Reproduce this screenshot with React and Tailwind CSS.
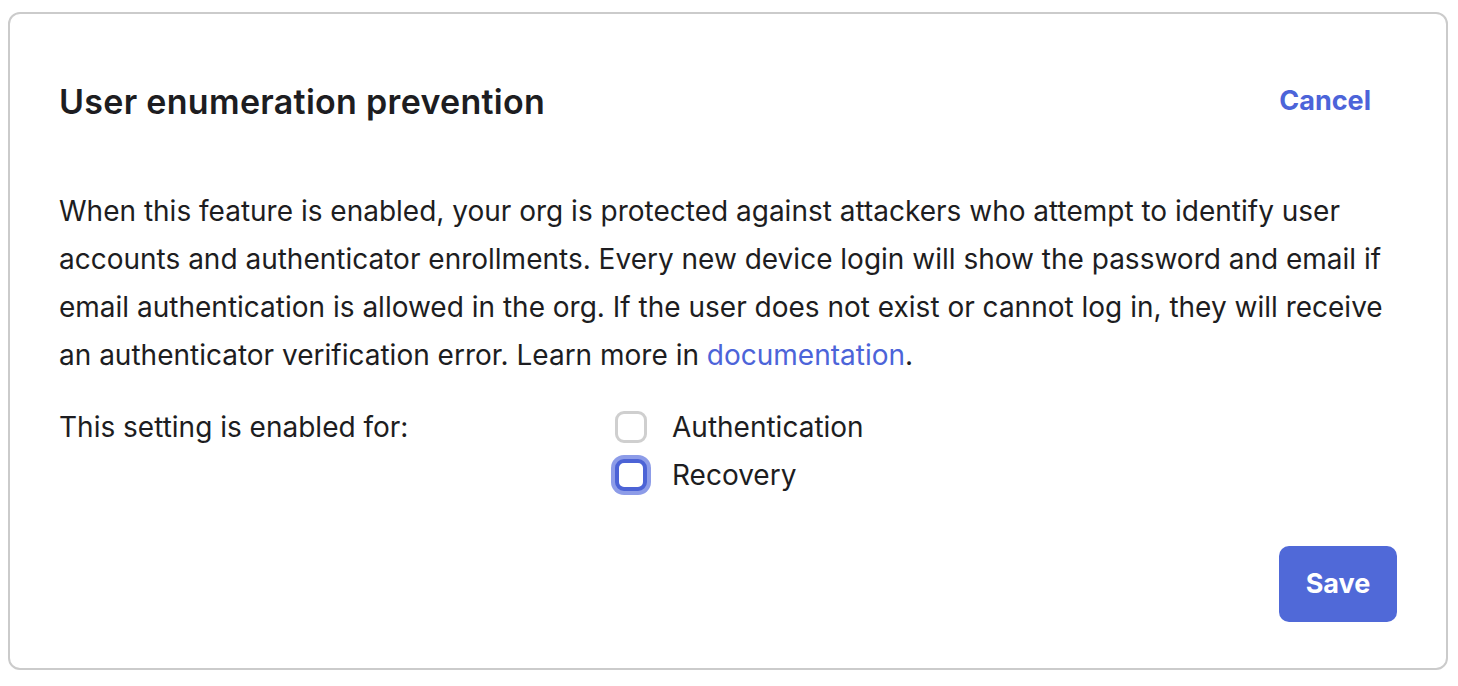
import React, { useState } from "react";

export default function App() {
  const [auth, setAuth] = useState(false);
  const [recovery, setRecovery] = useState(false);

  return (
    <div className="bg-white min-h-screen pt-[12px] pl-[8px] pr-[10px] pb-[15px] font-['Inter',sans-serif] text-[#1d1d21]">
      <div className="w-[1440px] border-2 border-[#cbcbcb] rounded-[12px] bg-white px-[49px] pt-[47px] pb-[46px]">
        <div className="h-[80px] flex items-center justify-between">
          <h2 className="text-[34px] font-semibold tracking-[0.3px]">User enumeration prevention</h2>
          <button className="text-[27px] font-bold text-[#4c64d9] px-[26px] h-[56px]">Cancel</button>
        </div>

        <p className="mt-[46px] text-[28px] leading-[48px]">
          When this feature is enabled, your org is protected against attackers who attempt to identify user
          accounts and authenticator enrollments. Every new device login will show the password and email if
          email authentication is allowed in the org. If the user does not exist or cannot log in, they will receive
          an authenticator verification error. Learn more in{" "}
          <a href="#" className="text-[#4c64d9]">documentation</a>.
        </p>

        <div className="mt-[24px] flex text-[28px] leading-[48px]">
          <div className="w-[556px]">This setting is enabled for:</div>
          <div className="flex flex-col">
            <label className="flex items-center gap-[25px] h-[48px] cursor-pointer">
              <span className="w-[32px] h-[32px] rounded-[9px] border-[3px] border-[#cfcfcf] bg-white" onClick={() => setAuth(!auth)} />
              <span>Authentication</span>
            </label>
            <label className="flex items-center gap-[25px] h-[48px] cursor-pointer">
              <span className="w-[32px] h-[32px] rounded-[9px] border-[4px] border-[#4c63d6] bg-white ring-4 ring-[#8d9ce8]" onClick={() => setRecovery(!recovery)} />
              <span>Recovery</span>
            </label>
          </div>
        </div>

        <div className="mt-[47px] flex justify-end">
          <button className="w-[118px] h-[76px] rounded-[10px] bg-[#5069d8] text-white text-[27px] font-bold">Save</button>
        </div>
      </div>
    </div>
  );
}
